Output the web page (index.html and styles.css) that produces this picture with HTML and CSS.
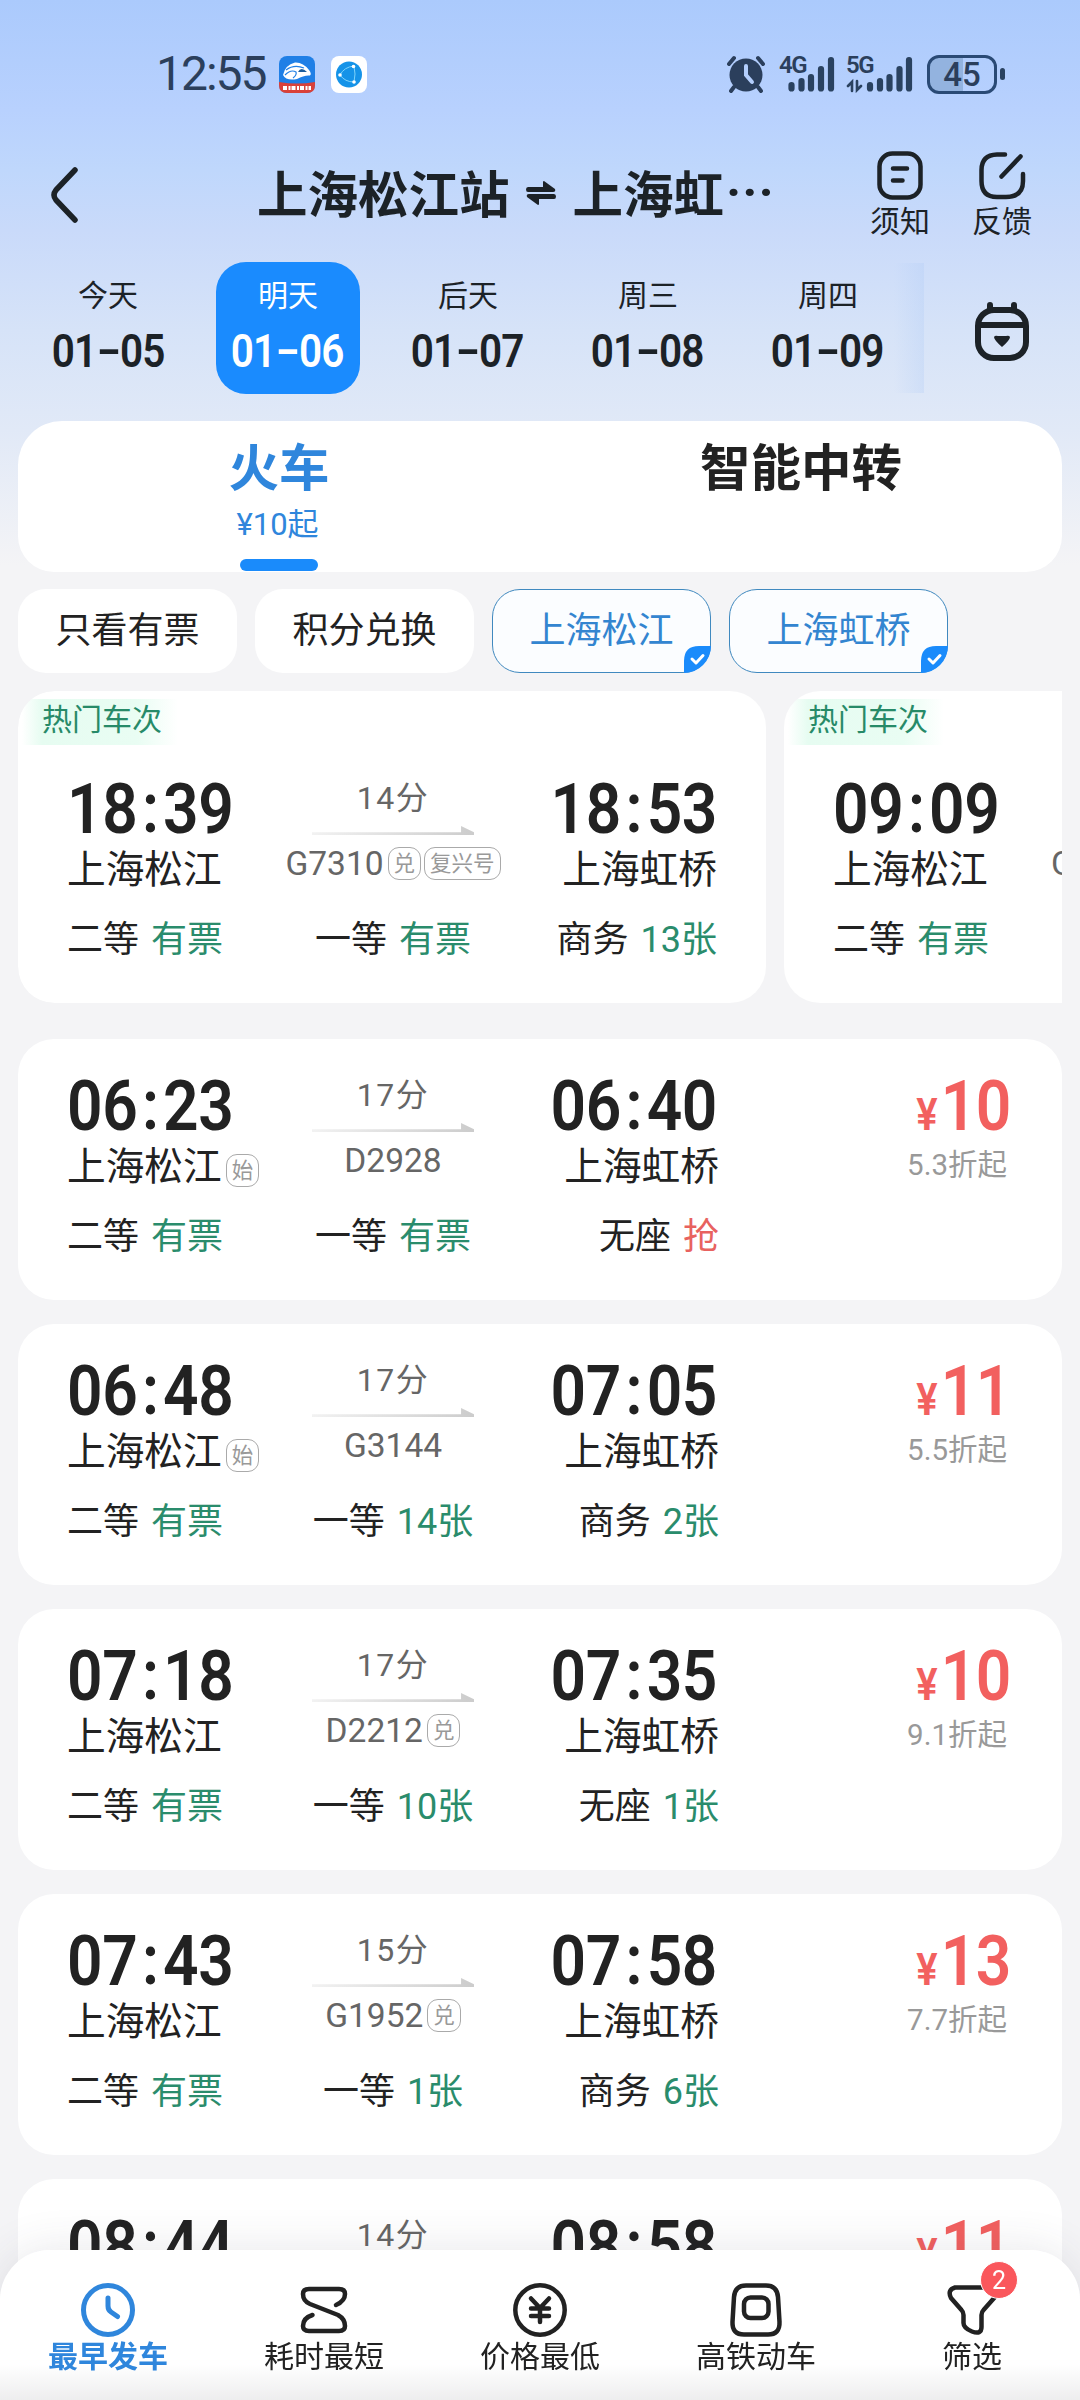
FILE: index.html
```html
<!DOCTYPE html>
<html lang="zh-CN">
<head>
    <meta charset="UTF-8">
    <meta name="viewport" content="width=device-width, initial-scale=1.0">
    <title>车票查询</title>
    <link rel="stylesheet" href="styles.css">
</head>
<body>
    <div class="status-bar">
        <span class="clock">12:55</span>
        <svg class="app-icon" width="36" height="37" viewBox="0 0 36 37">
            <rect width="36" height="37" rx="8" fill="#1f7fe6"/>
            <path d="M0 26Q18 29 36 26V29Q36 37 28 37H8Q0 37 0 29Z" fill="#d9413a"/>
            <path d="M4 19Q6 9 16 6.500Q24 6 30 14Q33 18 31 19.500Q25 19 18 23Q7 25 4 19Z" fill="#fff"/>
            <path d="M7 14Q15 8 25 12M6 19Q12 13 17 16Q18 19 14 22" fill="none" stroke="#1f7fe6" stroke-width="1.200"/>
            <path d="M19 16Q22 10 28 16Z" fill="#1d5d9c"/>
            <path d="M4 32H32" stroke="#fff" stroke-width="4" stroke-dasharray="4 1.5 2 1"/>
        </svg>
        <svg class="app-icon second" width="36" height="37" viewBox="0 0 36 37">
            <rect width="36" height="37" rx="8" fill="#fff"/>
            <circle cx="18" cy="18.500" r="13" fill="#1593e8"/>
            <path d="M9 19Q13 11 23 10Q25 18 23 26Q14 26 9 19" fill="none" stroke="#7fd4fb" stroke-width="1"/>
            <circle cx="9" cy="19" r="1.800" fill="#fff"/><circle cx="22.500" cy="10.500" r="1.800" fill="#fff"/><circle cx="23" cy="26" r="1.800" fill="#fff"/>
        </svg>
        <div class="status-right">
            <svg width="40" height="38" viewBox="0 0 40 38">
                <circle cx="20" cy="20" r="16.500" fill="#2b3f5c"/>
                <path d="M3 9L8 3M37 9L32 3M8 32L5 36M32 32L35 36" stroke="#2b3f5c" stroke-width="4" stroke-linecap="round"/>
                <path d="M20 11V20L26 27" fill="none" stroke="#b3cefc" stroke-width="4" stroke-linecap="round"/>
            </svg>
            <div class="signal">
                <span class="net">4G</span>
                <svg width="56" height="38" viewBox="0 0 56 38" stroke="#2a4260" stroke-width="6.200" stroke-linecap="round">
                    <path d="M12.500 30V33.500M22.500 26V33.500M32 22V33.500M42 14V33.500M52 5V33.500"/>
                </svg>
            </div>
            <div class="signal five">
                <span class="net">5G</span>
                <svg width="68" height="38" viewBox="0 0 68 38" stroke="#2a4260" stroke-width="6.200" stroke-linecap="round">
                    <path d="M24 30V33.500M34 26V33.500M43.500 22V33.500M53.500 14V33.500M63 5V33.500"/>
                    <path d="M6 36V27L2 31M11 26V35L15 31" fill="none" stroke-width="2.600"/>
                </svg>
            </div>
            <div class="battery">45</div>
            <div class="battery-cap"></div>
        </div>
    </div>

    <div class="title-bar">
        <svg class="back" width="30" height="60" viewBox="0 0 30 60">
            <path d="M25 5L6 25Q2 30 6 35L25 55" fill="none" stroke="#1c2227" stroke-width="5.500" stroke-linecap="round" stroke-linejoin="round"/>
        </svg>
        <h1 class="route">上海松江站
            <svg width="30" height="24" viewBox="0 0 30 24" fill="#1c2227">
                <path d="M2 6H17V1Q17 0 18 0L29 8Q30 11 27 11H2Q0 11 0 8.500Q0 6 2 6Z"/>
                <path d="M28 18H13V23Q13 24 12 24L1 16Q0 13 3 13H28Q30 13 30 15.500Q30 18 28 18Z"/>
            </svg>
            上海虹<span class="dots">···</span>
        </h1>
        <div class="tools">
            <div class="tool">
                <svg width="50" height="52" viewBox="0 0 50 52" fill="none" stroke="#1c2227" stroke-width="4.500" stroke-linecap="round">
                    <rect x="4.500" y="4.500" width="41" height="44" rx="13"/>
                    <path d="M18 19.500H32M18 31.500H27.500"/>
                </svg>
                <span>须知</span>
            </div>
            <div class="tool">
                <svg width="50" height="52" viewBox="0 0 50 52" fill="none" stroke="#1c2227" stroke-width="4.500" stroke-linecap="round">
                    <path d="M28 5.500H20Q4.500 6 4.500 21V32Q4.500 48 20 48H29Q46 48 46 32V25"/>
                    <path d="M24.500 27.500L43.500 7.500"/>
                </svg>
                <span>反馈</span>
            </div>
        </div>
    </div>

    <div class="date-bar">
        <div class="date"><span>今天</span><b>01<i>-</i>05</b></div>
        <div class="date active"><span>明天</span><b>01<i>-</i>06</b></div>
        <div class="date"><span>后天</span><b>01<i>-</i>07</b></div>
        <div class="date"><span>周三</span><b>01<i>-</i>08</b></div>
        <div class="date"><span>周四</span><b>01<i>-</i>09</b></div>
        <div class="calendar">
            <svg width="56" height="60" viewBox="0 0 56 60" fill="none" stroke="#1c2227" stroke-width="6">
                <rect x="4" y="8" width="48" height="48" rx="16"/>
                <path d="M4 23H52"/>
                <path d="M16 3V8M40 3V8" stroke-linecap="round"/>
                <path d="M20 35Q21 33 24 34H32Q35 33 36 35Q36 38 28 45Q20 38 20 35Z" fill="#1c2227" stroke="none"/>
            </svg>
        </div>
    </div>

    <div class="tabs">
        <div class="tab active">
            <strong>火车</strong>
            <small>¥10起</small>
            <div class="tab-line"></div>
        </div>
        <div class="tab"><strong>智能中转</strong></div>
    </div>

    <div class="chips">
        <div class="chip">只看有票</div>
        <div class="chip">积分兑换</div>
        <div class="chip checked">上海松江
            <svg class="check" width="27" height="27" viewBox="0 0 27 27">
                <path d="M0 27V15Q0 0 15 0H27A27 27 0 0 1 0 27Z" fill="#1a8bfb"/>
                <path d="M8 13L12 17L19 9.500" fill="none" stroke="#fff" stroke-width="3" stroke-linecap="round" stroke-linejoin="round"/>
            </svg>
        </div>
        <div class="chip checked">上海虹桥
            <svg class="check" width="27" height="27" viewBox="0 0 27 27">
                <path d="M0 27V15Q0 0 15 0H27A27 27 0 0 1 0 27Z" fill="#1a8bfb"/>
                <path d="M8 13L12 17L19 9.500" fill="none" stroke="#fff" stroke-width="3" stroke-linecap="round" stroke-linejoin="round"/>
            </svg>
        </div>
    </div>

    <div class="hot-list">
        <div class="card hot">
            <div class="hot-tag">热门车次</div>
            <div class="trip">
                <div class="from"><div class="time">18<i>:</i>39</div><div class="station">上海松江</div></div>
                <div class="train"><div class="duration">14分</div><div class="arrow"></div><div class="number">G7310<em>兑</em><em>复兴号</em></div></div>
                <div class="to"><div class="time">18<i>:</i>53</div><div class="station">上海虹桥</div></div>
            </div>
            <div class="seats">
                <div>二等<span>有票</span></div><div>一等<span>有票</span></div><div>商务<span>13张</span></div>
            </div>
        </div>
        <div class="card hot">
            <div class="hot-tag">热门车次</div>
            <div class="trip">
                <div class="from"><div class="time">09<i>:</i>09</div><div class="station">上海松江</div></div>
                <div class="train cut"><div class="number">G</div></div>
            </div>
            <div class="seats"><div>二等<span>有票</span></div></div>
        </div>
    </div>

    <div class="list">
        <div class="card">
            <div class="trip">
                <div class="from"><div class="time">06<i>:</i>23</div><div class="station">上海松江<em>始</em></div></div>
                <div class="train"><div class="duration">17分</div><div class="arrow"></div><div class="number">D2928</div></div>
                <div class="to"><div class="time">06<i>:</i>40</div><div class="station">上海虹桥</div></div>
                <div class="fare"><div class="price"><small>¥</small>10</div><div class="discount">5.3折起</div></div>
            </div>
            <div class="seats">
                <div>二等<span>有票</span></div><div>一等<span>有票</span></div><div>无座<span class="grab">抢</span></div>
            </div>
        </div>
        <div class="card">
            <div class="trip">
                <div class="from"><div class="time">06<i>:</i>48</div><div class="station">上海松江<em>始</em></div></div>
                <div class="train"><div class="duration">17分</div><div class="arrow"></div><div class="number">G3144</div></div>
                <div class="to"><div class="time">07<i>:</i>05</div><div class="station">上海虹桥</div></div>
                <div class="fare"><div class="price"><small>¥</small>11</div><div class="discount">5.5折起</div></div>
            </div>
            <div class="seats">
                <div>二等<span>有票</span></div><div>一等<span>14张</span></div><div>商务<span>2张</span></div>
            </div>
        </div>
        <div class="card">
            <div class="trip">
                <div class="from"><div class="time">07<i>:</i>18</div><div class="station">上海松江</div></div>
                <div class="train"><div class="duration">17分</div><div class="arrow"></div><div class="number">D2212<em>兑</em></div></div>
                <div class="to"><div class="time">07<i>:</i>35</div><div class="station">上海虹桥</div></div>
                <div class="fare"><div class="price"><small>¥</small>10</div><div class="discount">9.1折起</div></div>
            </div>
            <div class="seats">
                <div>二等<span>有票</span></div><div>一等<span>10张</span></div><div>无座<span>1张</span></div>
            </div>
        </div>
        <div class="card">
            <div class="trip">
                <div class="from"><div class="time">07<i>:</i>43</div><div class="station">上海松江</div></div>
                <div class="train"><div class="duration">15分</div><div class="arrow"></div><div class="number">G1952<em>兑</em></div></div>
                <div class="to"><div class="time">07<i>:</i>58</div><div class="station">上海虹桥</div></div>
                <div class="fare"><div class="price"><small>¥</small>13</div><div class="discount">7.7折起</div></div>
            </div>
            <div class="seats">
                <div>二等<span>有票</span></div><div>一等<span>1张</span></div><div>商务<span>6张</span></div>
            </div>
        </div>
        <div class="card">
            <div class="trip">
                <div class="from"><div class="time">08<i>:</i>44</div></div>
                <div class="train"><div class="duration">14分</div></div>
                <div class="to"><div class="time">08<i>:</i>58</div></div>
                <div class="fare"><div class="price"><small>¥</small>11</div></div>
            </div>
        </div>
    </div>

    <div class="sort-bar">
        <div class="sort active">
            <svg width="60" height="60" viewBox="0 0 60 60" fill="none" stroke="#2f86dc" stroke-width="5" stroke-linecap="round">
                <circle cx="30" cy="30" r="24.500"/>
                <path d="M30 18V26Q30 30 33 32L39.500 36.500"/>
            </svg>
            <span>最早发车</span>
        </div>
        <div class="sort">
            <svg width="60" height="60" viewBox="0 0 60 60" fill="none" stroke="#222" stroke-width="4.500" stroke-linecap="round" stroke-linejoin="round">
                <path d="M42 25Q51 21 51 14Q51 9 45 9H15Q9 9 9 14Q9 21 16 24L44 35Q51 39 51 46Q51 51 45 51H15Q9 51 9 46Q9 38 18.500 35"/>
            </svg>
            <span>耗时最短</span>
        </div>
        <div class="sort">
            <svg width="60" height="60" viewBox="0 0 60 60" fill="none" stroke="#222" stroke-width="4.500" stroke-linecap="round">
                <circle cx="30" cy="30" r="24.700"/>
                <path d="M21 18.500L30 28L39 18.500M30 28V42M21 28.500H39M21 36H39"/>
            </svg>
            <span>价格最低</span>
        </div>
        <div class="sort">
            <svg width="60" height="60" viewBox="0 0 60 60" fill="none" stroke="#222" stroke-width="4.500">
                <path d="M20 5.500H40Q51 5.500 52 17L53.500 42Q54 54.500 42 54.500H18Q6 54.500 6.500 42L8 17Q9 5.500 20 5.500Z"/>
                <rect x="18" y="17.500" width="24.500" height="20.500" rx="6.500"/>
            </svg>
            <span>高铁动车</span>
        </div>
        <div class="sort">
            <svg width="60" height="60" viewBox="0 0 60 60" fill="none" stroke="#222" stroke-width="4.500" stroke-linejoin="round">
                <path d="M13 7.500H47Q55 9 53 17L41.500 30Q39.500 32 39.500 35V47Q39.500 55 30 51.500Q21.500 48 21.500 43V35Q21.500 32 19.500 30L9 18Q5 10 13 7.500Z"/>
            </svg>
            <span>筛选</span>
            <div class="badge">2</div>
        </div>
    </div>
</body>
</html>
```
FILE: styles.css
```css
* {
    box-sizing: border-box;
}
body {
    margin: 0;
    height: 2400px;
    overflow: hidden;
    font-family: Roboto, "Noto Sans CJK SC", sans-serif;
    color: #222;
    background: #f4f4f6 linear-gradient(#abcafc 0, #b8d1fe 110px, #bfd7fc 170px, #c9dafa 230px, #d6e3f8 330px, #e1e9f7 430px, #f4f4f6 565px) no-repeat;
}
i, em {
    font-style: normal;
}
svg {
    display: block;
    flex-shrink: 0;
}
.status-bar {
    display: flex;
    align-items: center;
    height: 148px;
    padding-left: 156px;
    color: #2b3f5c;
}
.clock {
    width: 123px;
    font-size: 48px;
    line-height: 52px;
    letter-spacing: -2px;
}
.app-icon.second {
    margin-left: 16px;
}
.status-right {
    display: flex;
    align-items: center;
    margin-left: auto;
    margin-right: 75px;
}
.signal {
    position: relative;
    margin-left: 13px;
}
.signal.five {
    margin-left: 11px;
}
.net {
    position: absolute;
    left: 0;
    top: 0;
    font-size: 24px;
    font-weight: 600;
    line-height: 20px;
    letter-spacing: -1.5px;
}
.battery {
    width: 70px;
    height: 39px;
    margin-left: 13px;
    border: 3px solid #2a4a75;
    border-radius: 12px;
    background: linear-gradient(90deg, #93b3df 52%, transparent 52%);
    font-size: 33px;
    font-weight: 500;
    line-height: 34px;
    text-align: center;
}
.battery-cap {
    width: 5px;
    height: 12px;
    margin-left: 3px;
    border-radius: 3px;
    background: #2a4260;
}
.title-bar {
    display: flex;
    height: 107px;
    padding-left: 50px;
    color: #1c2227;
}
.back {
    margin-top: 17px;
}
.route {
    display: flex;
    align-items: center;
    width: 610px;
    height: 90px;
    margin: -2px 0 0 177px;
    font-size: 50.5px;
    font-weight: 700;
    white-space: nowrap;
}
.route svg {
    margin: 4px 17px 0 16px;
}
.dots {
    margin-left: 2px;
    letter-spacing: 1px;
}
.tools {
    display: flex;
    gap: 42px;
    margin-left: 3px;
}
.tool {
    display: flex;
    flex-direction: column;
    align-items: center;
    width: 60px;
    font-size: 30px;
    line-height: 41px;
}
.tool svg {
    margin-top: 1px;
}
.date-bar {
    display: flex;
    align-items: center;
    height: 146px;
    padding-left: 18px;
    color: #1c2227;
}
.date {
    display: flex;
    flex-direction: column;
    align-items: center;
    width: 144px;
    height: 132px;
    margin: 0 18px;
    padding-top: 11px;
    border-radius: 30px;
}
.date span {
    font-size: 30px;
    line-height: 46px;
}
.date b {
    font-size: 46px;
    font-weight: 600;
    line-height: 64px;
    letter-spacing: -1px;
    white-space: nowrap;
    transform: scaleX(0.88);
}
.date:not(:first-child) b {
    margin-left: -2px;
}
.date i {
    display: inline-block;
    width: 27px;
    text-align: center;
    transform: translateY(-1px) scaleX(1.7);
}
.date.active {
    background: #1a8bfe;
    color: #fff;
}
.calendar {
    flex: 1;
    height: 130px;
    margin-left: -24px;
    padding: 39px 0 0 80px;
    background: linear-gradient(90deg, transparent, rgba(172, 201, 246, 0.28)) no-repeat 0 0 / 30px 130px;
}
.tabs {
    display: flex;
    height: 151px;
    margin: 20px 18px 0;
    border-radius: 44px 44px 36px 36px;
    background: #fff;
}
.tab {
    display: flex;
    flex: 1;
    flex-direction: column;
    align-items: center;
    padding-top: 11px;
}
.tab strong {
    font-size: 50.5px;
    font-weight: 700;
    line-height: 74px;
}
.tab small {
    margin-left: -3px;
    font-size: 31px;
    line-height: 38px;
}
.tab.active {
    color: #2f86dc;
}
.tab-line {
    width: 78px;
    height: 12px;
    margin-top: 15px;
    border-radius: 6px;
    background: #1a8bfb;
}
.chips {
    display: flex;
    gap: 18px;
    padding: 17px 18px 18px;
}
.chip {
    position: relative;
    width: 219px;
    height: 84px;
    border-radius: 28px;
    background: #fff;
    font-size: 36px;
    line-height: 85px;
    text-align: center;
}
.chip.checked {
    border: 1.5px solid #4089bf;
    background: #fbfdff;
    color: #3385d0;
    line-height: 83px;
}
.check {
    position: absolute;
    right: -1px;
    bottom: -1px;
}
.hot-list {
    display: flex;
    gap: 18px;
    margin: 0 18px 36px;
    border-radius: 36px 0 0 36px;
    overflow: hidden;
}
.card {
    height: 261px;
    padding: 30px 51px 0 49px;
    border-radius: 36px;
    background: #fff;
}
.card.hot {
    flex-shrink: 0;
    width: 748px;
    height: 312px;
    padding-top: 0;
    background: #fff linear-gradient(90deg, #fff, #e6fcf1 20px, #e9fdf3 115px, #fff) no-repeat 4px 8px / 156px 46px;
}
.hot-tag {
    height: 81px;
    margin-left: -25px;
    color: #278a68;
    font-size: 30px;
    line-height: 57px;
}
.trip {
    display: grid;
    grid-template-columns: 218px 216px 216px 1fr;
    height: 122px;
    white-space: nowrap;
}
.time, .price {
    height: 72px;
    font-size: 70px;
    font-weight: 600;
    line-height: 74px;
    letter-spacing: -0.5px;
    transform: scaleX(0.89);
    transform-origin: left;
}
.time i {
    display: inline-block;
    width: 29px;
    text-align: center;
    transform: translateY(-1px);
}
.station {
    font-size: 38.7px;
    line-height: 51px;
}
.to, .fare {
    text-align: right;
}
.to .time, .price {
    transform-origin: right;
}
.list .to .station, .list .seats div:nth-child(3) {
    margin-right: -2px;
}
.train {
    display: flex;
    flex-direction: column;
    align-items: center;
    color: #666;
}
.train.cut {
    align-items: flex-start;
    padding-top: 66px;
}
.duration {
    font-size: 32px;
    line-height: 53px;
    letter-spacing: 1.5px;
}
.arrow {
    width: 162px;
    height: 9px;
    margin: 1px 0 3px;
    background: linear-gradient(90deg, #f2f2f2, #ccc);
    clip-path: polygon(0 70%, 92% 70%, 92% 0, 100% 70%, 100% 100%, 0 100%);
}
.number {
    display: flex;
    align-items: center;
    height: 50px;
    font-size: 33.5px;
}
em {
    display: inline-block;
    height: 33px;
    margin-left: 4px;
    padding: 0 5px;
    border: 1.5px solid #aaa;
    border-radius: 11px;
    color: #999;
    font-size: 21.5px;
    line-height: 31px;
}
.number em + em {
    margin-left: 3px;
}
.station em {
    vertical-align: 2px;
}
.seats {
    display: grid;
    grid-template-columns: 218px 216px 216px;
    margin-top: 22px;
    font-size: 36px;
    line-height: 48px;
    white-space: nowrap;
}
.seats div:nth-child(2) {
    text-align: center;
}
.seats div:nth-child(3) {
    text-align: right;
}
.seats span {
    margin-left: 12px;
    color: #2a8c6c;
}
.seats .grab {
    color: #e8625f;
}
.fare {
    color: #f2605f;
}
.price small {
    margin-right: 4px;
    font-size: 45px;
}
.discount {
    padding-right: 4px;
    color: #999;
    font-size: 29.5px;
    line-height: 49px;
}
.list {
    display: flex;
    flex-direction: column;
    gap: 24px;
    padding: 0 18px;
}
.sort-bar {
    position: fixed;
    left: 0;
    right: 0;
    bottom: 0;
    display: flex;
    height: 150px;
    border-radius: 50px 50px 0 0;
    background: linear-gradient(#fff 115px, #ededee 150px);
    box-shadow: 0 0 46px rgba(60, 60, 80, 0.12);
}
.sort {
    position: relative;
    display: flex;
    flex: 1;
    flex-direction: column;
    align-items: center;
    padding-top: 30px;
    font-size: 30px;
    line-height: 33px;
}
.sort.active {
    color: #2f86dc;
    font-weight: 700;
}
.badge {
    position: absolute;
    left: 116px;
    top: 11px;
    width: 38px;
    height: 38px;
    border: 1px solid #fff;
    border-radius: 50%;
    background: #fa575c;
    color: #fff;
    font-size: 25px;
    line-height: 37px;
    text-align: center;
}
```
